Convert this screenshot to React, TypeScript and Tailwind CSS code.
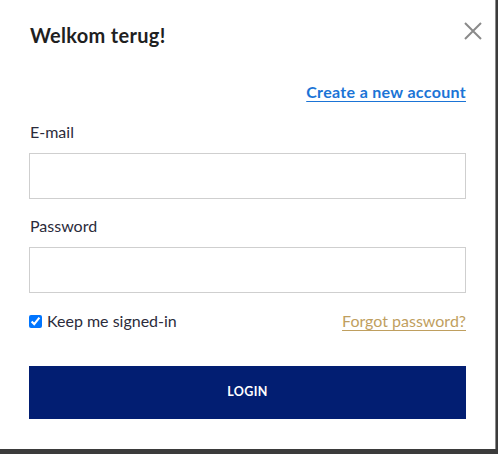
export default function App() {
  return (
    <div className="flex h-[454px] w-[498px] bg-[#3b3b3b]" style={{ fontFamily: 'Lato, "Open Sans", sans-serif' }}>
      <div className="flex h-[449px] w-[496px] flex-col border-r border-[#8a8a8a] bg-white px-[29px] pt-[21px]">
        <div className="flex items-start justify-between">
          <h2 className="pl-px text-[20px] font-bold leading-[28px] tracking-[0.015em] text-[#1f1f1f]">Welkom terug!</h2>
          <button type="button" aria-label="Close" className="-mr-[16px] mt-[1px] text-[#8a8a8a]">
            <svg width="18" height="18" viewBox="0 0 18 18" aria-hidden>
              <path d="M1 1L17 17M17 1L1 17" stroke="currentColor" strokeWidth="2" fill="none" />
            </svg>
          </button>
        </div>

        <div className="mt-[33px] flex justify-end">
          <a href="#" className="text-[16px] font-bold leading-[20px] tracking-[0.02em] text-[#1b74d6] underline underline-offset-[3px]">
            Create a new account
          </a>
        </div>

        <label className="mt-[20px] pl-px text-[16px] leading-[20px] text-[#2b2b3b]">E-mail</label>
        <input type="email" className="mt-[11px] h-[46px] w-full border border-[#cfcfcf] px-3 outline-none" />

        <label className="mt-[17px] pl-px text-[16px] leading-[20px] text-[#2b2b3b]">Password</label>
        <input type="password" className="mt-[11px] h-[46px] w-full border border-[#cfcfcf] px-3 outline-none" />

        <div className="mt-[18px] flex h-[20px] items-center justify-between">
          <label className="flex items-center gap-[5px] text-[16px] leading-[20px] text-[#2b2b3b]">
            <input type="checkbox" defaultChecked className="m-0 h-[13px] w-[13px]" />
            Keep me signed-in
          </label>
          <a href="#" className="text-[16px] leading-[20px] text-[#bf9f5f] underline underline-offset-[3px]">
            Forgot password?
          </a>
        </div>

        <button type="button" className="mt-[35px] h-[53px] w-full bg-[#021e72] text-[12.5px] font-bold tracking-[0.03em] text-white">
          LOGIN
        </button>
      </div>
    </div>
  );
}
